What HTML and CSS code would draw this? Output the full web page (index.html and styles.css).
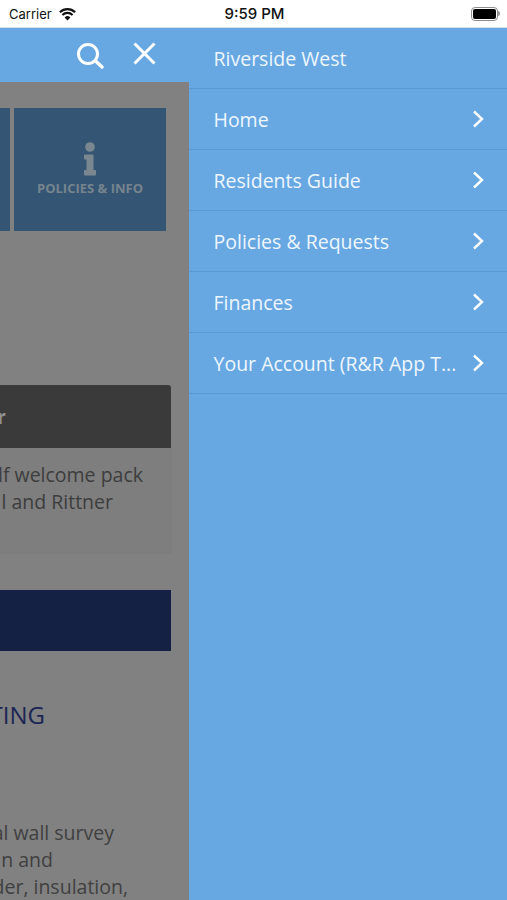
FILE: index.html
```html
<!DOCTYPE html>
<html lang="en">
<head>
    <meta charset="UTF-8">
    <title>Riverside West</title>
    <link rel="stylesheet" href="styles.css">
</head>
<body>
    <div class="status">
        <div class="status-left">
            <span>Carrier</span>
            <svg class="wifi" width="19" height="14" viewBox="0 0 19 14">
                <path d="M9.5 13.6 6.6 10.4a4.2 4.2 0 0 1 5.8 0z" fill="#111"/>
                <path d="M1.9 5.2a11 11 0 0 1 15.2 0M4.4 8a7.4 7.4 0 0 1 10.2 0" fill="none" stroke="#111" stroke-width="2.2"/>
            </svg>
        </div>
        <div class="status-time">9:59 PM</div>
        <div class="status-right">
            <div class="battery"><div class="battery-level"></div></div>
            <div class="battery-nib"></div>
        </div>
    </div>

    <div class="app">
        <div class="pane">
            <div class="pane-header">
                <svg width="30" height="30" viewBox="0 0 30 30">
                    <circle cx="12" cy="15" r="9.5" fill="none" stroke="#fff" stroke-width="3"/>
                    <path d="M19.5 22 26 28" fill="none" stroke="#fff" stroke-width="3.4" stroke-linecap="round"/>
                </svg>
                <svg width="24" height="24" viewBox="0 0 24 24">
                    <path d="M1.5 1.5l20 20M21.5 1.5l-20 20" fill="none" stroke="#fff" stroke-width="3"/>
                </svg>
            </div>
            <div class="content">
                <div class="tiles">
                    <div class="tile"></div>
                    <div class="tile">
                        <svg width="14" height="34" viewBox="0 0 14 34">
                            <circle cx="7" cy="5" r="4.8" fill="#7a8791"/>
                            <path d="M1.5 13H10V28.5H12.5V33H1.5V28.5H4V17H1.5z" fill="#7a8791" stroke="#7a8791" stroke-linejoin="round"/>
                        </svg>
                        <div class="tile-label">POLICIES &amp; INFO</div>
                    </div>
                </div>
                <div class="dark-bar"><span>r</span></div>
                <div class="card">
                    <div class="line pad-a">lf welcome pack</div>
                    <div class="line pad-b">l and Rittner</div>
                </div>
                <div class="navy-bar"></div>
                <div class="heading">TING</div>
                <div class="survey">
                    <div class="line pad-c">al wall survey</div>
                    <div class="line pad-d">n and</div>
                    <div class="line pad-e">der, insulation,</div>
                </div>
            </div>
        </div>

        <div class="menu">
            <div class="menu-row"><span class="menu-text">Riverside West</span></div>
            <div class="menu-row">
                <span class="menu-text">Home</span>
                <svg class="chevron" width="12" height="18" viewBox="0 0 12 18"><path d="M2 1.5 10 9l-8 7.5" /></svg>
            </div>
            <div class="menu-row">
                <span class="menu-text">Residents Guide</span>
                <svg class="chevron" width="12" height="18" viewBox="0 0 12 18"><path d="M2 1.5 10 9l-8 7.5" /></svg>
            </div>
            <div class="menu-row">
                <span class="menu-text">Policies &amp; Requests</span>
                <svg class="chevron" width="12" height="18" viewBox="0 0 12 18"><path d="M2 1.5 10 9l-8 7.5" /></svg>
            </div>
            <div class="menu-row">
                <span class="menu-text">Finances</span>
                <svg class="chevron" width="12" height="18" viewBox="0 0 12 18"><path d="M2 1.5 10 9l-8 7.5" /></svg>
            </div>
            <div class="menu-row">
                <span class="menu-text">Your Account (R&amp;R App T...</span>
                <svg class="chevron" width="12" height="18" viewBox="0 0 12 18"><path d="M2 1.5 10 9l-8 7.5" /></svg>
            </div>
        </div>
    </div>
</body>
</html>
```

FILE: styles.css
```css
html, body {
    margin: 0;
    height: 100%;
}
body {
    font-family: 'Open Sans', sans-serif;
    background-color: #67a8e3;
    overflow: hidden;
}
.status {
    height: 27px;
    background: #fff;
    border-bottom: 1px solid #cfdfee;
    display: flex;
    align-items: center;
    padding: 0 7px 0 9px;
    font-family: 'Inter', sans-serif;
    color: #111;
    font-size: 13px;
}
.status-left {
    flex: 1;
    display: flex;
    align-items: center;
    gap: 6px;
}
.status-time {
    font-size: 15px;
    font-weight: 500;
}
.status-right {
    flex: 1;
    display: flex;
    align-items: center;
    justify-content: flex-end;
}
.battery {
    width: 27px;
    height: 14px;
    border: 1.5px solid #8d8d8d;
    border-radius: 4px;
    padding: 1px;
    box-sizing: border-box;
}
.battery-level {
    height: 100%;
    background: #000;
    border-radius: 2px;
}
.battery-nib {
    width: 2px;
    height: 5px;
    background: #9a9a9a;
    border-radius: 0 2px 2px 0;
}
.app {
    display: flex;
    height: 872px;
}
.pane {
    width: 189px;
    flex: none;
    display: flex;
    flex-direction: column;
}
.pane-header {
    height: 54px;
    display: flex;
    align-items: center;
    justify-content: flex-end;
    gap: 27px;
    padding: 0 32px 3px 0;
    box-sizing: border-box;
}
.content {
    flex: 1;
    background: #818181;
    overflow: hidden;
    display: flex;
    flex-direction: column;
    align-items: flex-end;
    padding-top: 26px;
}
.tiles {
    display: flex;
    gap: 4px;
    padding-right: 23px;
}
.tile {
    width: 152px;
    height: 123px;
    flex: none;
    background: #345674;
    display: flex;
    flex-direction: column;
    align-items: center;
    padding-top: 34px;
    box-sizing: border-box;
}
.tile-label {
    font-size: 13px;
    font-weight: 700;
    color: #76848f;
    margin-top: 3px;
    white-space: nowrap;
}
.dark-bar {
    width: 200px;
    height: 63px;
    flex: none;
    margin: 154px 18px 0 0;
    background: #3a3a3a;
    border-radius: 3px 3px 0 0;
    display: flex;
    align-items: center;
    justify-content: flex-end;
    padding-right: 165px;
    box-sizing: border-box;
    font-size: 19px;
    font-weight: 700;
    color: #8f8f8f;
}
.card {
    width: 200px;
    height: 106px;
    flex: none;
    margin-right: 17px;
    background: #7e7e7e;
    padding-top: 13px;
    box-sizing: border-box;
    color: #3d3d3d;
}
.line {
    display: flex;
    justify-content: flex-end;
    white-space: nowrap;
    font-size: 19.5px;
    line-height: 27px;
}
.pad-a { padding-right: 29px; }
.pad-b { padding-right: 59px; }
.pad-c { padding-right: 75px; }
.pad-d { padding-right: 136px; }
.pad-e { padding-right: 61px; }
.navy-bar {
    width: 200px;
    height: 61px;
    flex: none;
    margin: 36px 18px 0 0;
    background: #142044;
}
.heading {
    margin: 47px 144px 0 0;
    font-size: 24px;
    line-height: 33px;
    color: #1b2554;
    white-space: nowrap;
}
.survey {
    align-self: stretch;
    margin-top: 88px;
    color: #404040;
}
.menu {
    flex: 1;
    min-width: 0;
}
.menu-row {
    height: 60px;
    border-bottom: 1px solid #5b97d1;
    display: flex;
    align-items: center;
    justify-content: space-between;
    padding: 0 23px 0 24.5px;
}
.menu-text {
    font-size: 19.5px;
    color: #eef6fd;
    white-space: nowrap;
}
.chevron {
    flex: none;
}
.chevron path {
    fill: none;
    stroke: #fff;
    stroke-width: 2.4;
}
```
